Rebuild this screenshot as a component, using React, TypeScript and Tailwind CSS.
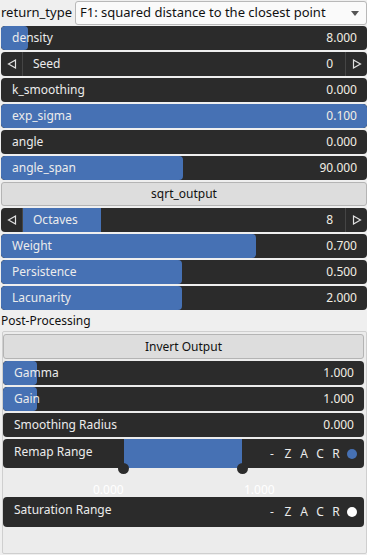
import React from "react";

const BLUE = "bg-[#4671b4]";

function Slider({ label, value, fill }: { label: string; value: string; fill: number }) {
  return (
    <div className="relative h-[24px] rounded-[4px] bg-[#2b2b2b] overflow-hidden flex items-center justify-between pl-[11px] pr-[10px] text-[#ececec]">
      {fill > 0 && (
        <div className={`absolute left-0 top-0 bottom-0 rounded-[4px] ${BLUE}`} style={{ width: fill }} />
      )}
      <span className="relative">{label}</span>
      <span className="relative text-[#f2eee4]">{value}</span>
    </div>
  );
}

function Stepper({ label, value, fillTo }: { label: string; value: string; fillTo?: number }) {
  return (
    <div className="relative h-[24px] rounded-[4px] bg-[#2b2b2b] overflow-hidden flex items-center text-[#ececec]">
      <div className="w-[22px] h-full flex items-center justify-center border-r border-[#454545]">
        <svg width="10" height="10" viewBox="0 0 10 10"><path d="M8.5 1 L1.5 5 L8.5 9 Z" fill="none" stroke="#e0e0e0" strokeWidth="1.2" /></svg>
      </div>
      <div className="relative flex-1 h-full flex items-center justify-between pl-[10px] pr-[12px]">
        {fillTo !== undefined && (
          <div className={`absolute top-0 bottom-0 left-0 ${BLUE}`} style={{ width: fillTo }} />
        )}
        <span className="relative">{label}</span>
        <span className="relative text-[#f2eee4]">{value}</span>
      </div>
      <div className="w-[22px] h-full flex items-center justify-center border-l border-[#454545]">
        <svg width="10" height="10" viewBox="0 0 10 10"><path d="M1.5 1 L8.5 5 L1.5 9 Z" fill="none" stroke="#e0e0e0" strokeWidth="1.2" /></svg>
      </div>
    </div>
  );
}

function Button({ label, h = "h-[24px]" }: { label: string; h?: string }) {
  return (
    <div className={`${h} rounded-[3px] border border-[#b4b4b4] bg-[#dddddd] flex items-center justify-center text-[#111]`}>
      {label}
    </div>
  );
}

function ZACR({ dot }: { dot: string }) {
  return (
    <div className="flex items-center text-[#ececec] text-[12px]">
      {["-", "Z", "A", "C", "R"].map((c) => (
        <span key={c} className="w-[16px] text-center">{c}</span>
      ))}
      <span className={`ml-[3px] w-[10px] h-[10px] rounded-full ${dot}`} />
    </div>
  );
}

export default function App() {
  return (
    <div
      className="w-[367px] h-[555px] bg-[#efefef] text-[12px] overflow-hidden pt-[1px]"
      style={{ fontFamily: '"Noto Sans", "Open Sans", sans-serif' }}
    >
      <div className="flex items-center h-[24px] text-[13px]">
        <span className="pl-[1px] pr-[3px] text-[#111]">return_type</span>
        <div className="flex-1 h-[24px] rounded-[3px] border border-[#b8b8b8] bg-[#fafafa] flex items-center justify-between pl-[4px] pr-[7px] text-[#111]">
          <span>F1: squared distance to the closest point</span>
          <svg width="8" height="5" viewBox="0 0 8 5"><path d="M0 0 L8 0 L4 5 Z" fill="#555" /></svg>
        </div>
      </div>
      <div className="flex flex-col gap-[2px] mt-[1px] ml-[1px] mr-[0px]">
        <Slider label="density" value="8.000" fill={27} />
        <Stepper label="Seed" value="0" />
        <Slider label="k_smoothing" value="0.000" fill={0} />
        <Slider label="exp_sigma" value="0.100" fill={366} />
        <Slider label="angle" value="0.000" fill={0} />
        <Slider label="angle_span" value="90.000" fill={182} />
        <Button label="sqrt_output" />
        <Stepper label="Octaves" value="8" fillTo={78} />
        <Slider label="Weight" value="0.700" fill={255} />
        <Slider label="Persistence" value="0.500" fill={181} />
        <Slider label="Lacunarity" value="2.000" fill={181} />
      </div>
      <div className="h-[21px] flex items-center pl-[1px] text-[#111]">Post-Processing</div>
      <div className="ml-[2px] h-[223px] border border-[#cfcfcf] bg-[#ececec] rounded-[2px] pt-[2px] pr-[2px]">
        <Button label="Invert Output" h="h-[25px]" />
        <div className="flex flex-col gap-[2px] mt-[2px]">
          <Slider label="Gamma" value="1.000" fill={34} />
          <Slider label="Gain" value="1.000" fill={34} />
          <Slider label="Smoothing Radius" value="0.000" fill={0} />
          <div>
            <div className="relative h-[29px] rounded-[4px] bg-[#2b2b2b] flex items-start justify-between pl-[11px] pr-[7px] pt-[4px] text-[#ececec]">
              <div className={`absolute top-0 bottom-0 left-[121px] w-[118px] ${BLUE}`} />
              <div className="absolute left-[115px] bottom-[-6px] w-[11px] h-[11px] rounded-full bg-[#2b2b2b]" />
              <div className="absolute left-[234px] bottom-[-6px] w-[11px] h-[11px] rounded-full bg-[#2b2b2b]" />
              <span className="relative">Remap Range</span>
              <div className="relative mt-[2px]"><ZACR dot="bg-[#4671b4]" /></div>
            </div>
            <div className="relative h-[29px] text-[#ffffff] text-[12px]">
              <span className="absolute left-[90px] top-[13px]">0.000</span>
              <span className="absolute left-[241px] top-[13px]">1.000</span>
            </div>
            <div className="relative h-[30px] rounded-[4px] bg-[#2b2b2b] flex items-start justify-between pl-[11px] pr-[7px] pt-[4px] text-[#ececec]">
              <span className="relative">Saturation Range</span>
              <div className="relative mt-[2px]"><ZACR dot="bg-[#ffffff]" /></div>
            </div>
          </div>
        </div>
      </div>
    </div>
  );
}
